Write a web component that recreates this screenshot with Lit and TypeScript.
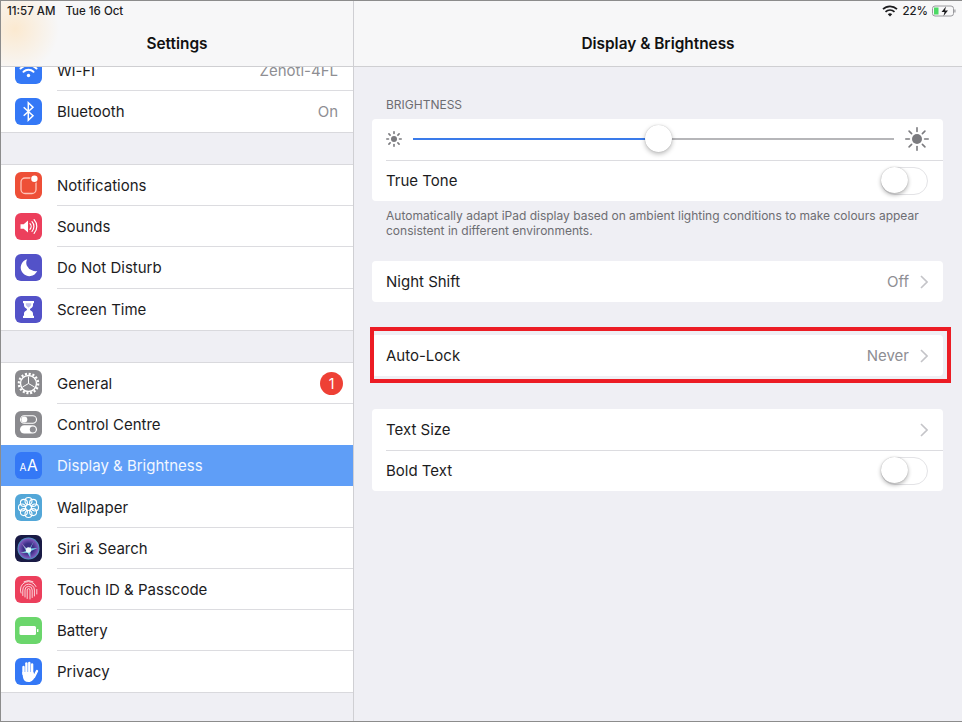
import { LitElement, html, css, svg, nothing } from "lit";
import { customElement } from "lit/decorators.js";

const polar = (r: number, deg: number) => {
  const a = (deg * Math.PI) / 180;
  return [13.5 + r * Math.cos(a), 13.5 + r * Math.sin(a)];
};

const icons: Record<string, unknown> = {
  wifi: svg`<g fill="none" stroke="#fff" stroke-width="2" stroke-linecap="round"><path d="M5.5 11.5a11.5 11.5 0 0 1 16 0"/><path d="M8.5 14.8a7.2 7.2 0 0 1 10 0"/></g><circle cx="13.5" cy="18.5" r="1.7" fill="#fff"/>`,
  bluetooth: svg`<path d="M8.7 9.2 18 17.8 13.3 22.2V4.8L18 9.2 8.7 17.8" fill="none" stroke="#fff" stroke-width="1.5"/>`,
  notifications: svg`<rect x="6" y="6" width="15" height="15.5" rx="4" fill="none" stroke="#ffc4b8" stroke-width="1.3"/><circle cx="19.4" cy="6.8" r="4.2" fill="#ee4f37"/><circle cx="19.4" cy="6.8" r="3.2" fill="#fff"/>`,
  sounds: svg`<path d="M5.5 11.2h3.2l4.3-3.7v12l-4.3-3.7H5.5z" fill="#fff"/><g fill="none" stroke="#fff" stroke-width="1.2" stroke-linecap="round"><path d="M15 10.7a4 4 0 0 1 0 5.6"/><path d="M17 8.7a7 7 0 0 1 0 9.6"/><path d="M19.1 6.7a10 10 0 0 1 0 13.6"/></g>`,
  moon: svg`<path d="M12.2 5.2a8.6 8.6 0 1 0 10 11.8 7.6 7.6 0 0 1-5.2-.8 7.6 7.6 0 0 1-4.8-11z" fill="#fff"/>`,
  hourglass: svg`<path d="M8 5h11v2.200h-1v2.100c0 2.600-3 3-3 4.200s3 1.600 3 4.200v2.100h1V22H8v-2.200h1v-2.100c0-2.600 3-3 3-4.200s-3-1.600-3-4.200V7.200H8z" fill="#fff"/><path d="M10.800 7.200h5.400v1.600c0 1.300-1.700 1.900-2.700 3-1-1.100-2.700-1.700-2.700-3z" fill="#5352c8" opacity=".35"/>`,
  gear: svg`<circle cx="13.5" cy="13.500" r="8" fill="none" stroke="#fff" stroke-width="1.400"/><circle cx="13.5" cy="13.500" r="9.700" fill="none" stroke="#fff" stroke-width="2.200" stroke-dasharray="2.100 1.700"/><g stroke="#fff" stroke-width="1"><path d="M13.5 13.500V6.500"/><path d="M13.5 13.500 19.500 17"/><path d="M13.5 13.500 7.500 17"/></g>`,
  control: svg`<rect x="5.500" y="4.800" width="16" height="7.400" rx="3.700" fill="none" stroke="#fff" stroke-width="1.100"/><circle cx="9.300" cy="8.500" r="3" fill="#fff"/><rect x="5" y="14.200" width="17" height="8.400" rx="4.200" fill="#fff"/><circle cx="17.800" cy="18.400" r="3" fill="#8e8e93"/>`,
  aa: svg`<text x="4.500" y="18.500" class="aa" font-size="10">A</text><text x="12" y="19" class="aa" font-size="15.500">A</text>`,
  flower: svg`<g fill="none" stroke="#fff" stroke-width="1.100">${[0, 45, 90, 135, 180, 225, 270, 315].map((d) => {
    const [x, y] = polar(6.5, d);
    return svg`<circle cx=${x} cy=${y} r="3.500"/>`;
  })}<circle cx="13.500" cy="13.500" r="3"/></g>`,
  siri: svg`<circle cx="13.500" cy="13.500" r="11" fill="url(#siriRing)"/><path d="M13.500 15.500 6.500 8l4.800 8-6.300 2 7.500-.2L15.500 23l-.2-6.800L22.500 13l-7 .6L19 6z" fill="url(#siriBlade)"/><circle cx="13.500" cy="15" r="2.700" fill="#eaf8fc"/>`,
  finger: svg`<g fill="none" stroke="#fff" stroke-width=".85" stroke-linecap="round" opacity=".92"><path d="M6 17a8 8 0 0 1 15-6.500"/><path d="M21.800 13.500V18"/><path d="M7.800 19.500V14a5.800 5.800 0 0 1 11.600 0v6"/><path d="M10 21v-7a3.600 3.600 0 0 1 7.200 0v7.500"/><path d="M12.200 22.500V14a1.400 1.400 0 0 1 2.800 0v9"/><path d="M9 5.700a9 9 0 0 1 9 0"/></g>`,
  battery: svg`<rect x="4.500" y="9" width="16.500" height="9" rx="1.500" fill="#fff"/><rect x="22" y="12" width="1.400" height="3" rx=".6" fill="#fff"/>`,
  hand: svg`<g stroke="#fff" stroke-width="2.400" stroke-linecap="round" fill="none"><path d="M8.500 9v7"/><path d="M11.400 5.500v9"/><path d="M14.300 5v9"/><path d="M17.100 6.500v8"/><path d="M19 19l3-6"/></g><path d="M7.300 14h11l1.700 4c-1 3.500-3.200 6-6.500 6-3.500 0-5-2-5.500-4.500z" fill="#fff"/>`,
};

type Row = { name: string; color: string; icon: string; value?: string; badge?: string; selected?: boolean };

const groups: Row[][] = [
  [
    { name: "Wi-Fi", color: "#3478f6", icon: "wifi", value: "Zenoti-4FL" },
    { name: "Bluetooth", color: "#3478f6", icon: "bluetooth", value: "On" },
  ],
  [
    { name: "Notifications", color: "#ee4f37", icon: "notifications" },
    { name: "Sounds", color: "#ec3f5c", icon: "sounds" },
    { name: "Do Not Disturb", color: "#5352c8", icon: "moon" },
    { name: "Screen Time", color: "#5352c8", icon: "hourglass" },
  ],
  [
    { name: "General", color: "#8a8a8e", icon: "gear", badge: "1" },
    { name: "Control Centre", color: "#8a8a8e", icon: "control" },
    { name: "Display & Brightness", color: "#3478f6", icon: "aa", selected: true },
    { name: "Wallpaper", color: "#53a7d8", icon: "flower" },
    { name: "Siri & Search", color: "#191a45", icon: "siri" },
    { name: "Touch ID & Passcode", color: "#ec3f5c", icon: "finger" },
    { name: "Battery", color: "#6bd66c", icon: "battery" },
    { name: "Privacy", color: "#3478f6", icon: "hand" },
  ],
];

const sun = (core: number, inner: number, outer: number, w: number) => svg`
  <circle cx="12" cy="12" r=${core} fill="#7b7b7f"/>
  <g stroke="#7b7b7f" stroke-width=${w} stroke-linecap="round">
    ${[0, 45, 90, 135, 180, 225, 270, 315].map((d) => {
      const a = (d * Math.PI) / 180;
      return svg`<line x1=${12 + inner * Math.cos(a)} y1=${12 + inner * Math.sin(a)} x2=${12 + outer * Math.cos(a)} y2=${12 + outer * Math.sin(a)}/>`;
    })}
  </g>`;

const chevron = html`<svg class="chev" width="8" height="14" viewBox="0 0 8 14"><path d="M1 1 7 7 1 13" fill="none" stroke="#c4c4c8" stroke-width="1.600"/></svg>`;
const toggle = html`<div class="toggle"><div class="knob"></div></div>`;

@customElement("app-root")
export class AppRoot extends LitElement {
  static styles = css`
    :host {
      display: block;
      position: relative;
      width: 962px;
      height: 722px;
      box-sizing: border-box;
      overflow: hidden;
      border-top: 1px solid #8c8c8c;
      border-left: 1px solid #8c8c8c;
      border-bottom: 1px solid #8c8c8c;
      background: #efeff4;
      font-family: "Inter", "Liberation Sans", sans-serif;
      font-size: 15px;
      color: #1c1c1e;
    }
    .layout { display: flex; height: 100%; }
    .side {
      width: 352px;
      flex: none;
      display: flex;
      flex-direction: column;
      border-right: 1px solid #cfcfd3;
    }
    .bar {
      height: 66px;
      flex: none;
      box-sizing: border-box;
      border-bottom: 1px solid #cfcfd2;
      background: #f7f7f8;
      display: flex;
      align-items: flex-end;
      justify-content: center;
      padding-bottom: 12px;
      font-size: 15.4px;
      font-weight: 600;
      line-height: 20px;
      color: #111;
      position: relative;
      z-index: 1;
    }
    .side .bar {
      background: radial-gradient(circle at 14px 28px, rgba(255, 222, 175, 0.55), rgba(255, 222, 175, 0) 44px), #f7f7f8;
    }
    .list { flex: 1; overflow: hidden; }
    .group { background: #fff; border-bottom: 1px solid #d9d9dd; margin-bottom: 31.2px; }
    .group.top { border-top: 1px solid #d9d9dd; }
    .group.first { margin-top: -17.4px; margin-bottom: 31px; }
    .row {
      height: 41.2px;
      display: flex;
      align-items: center;
      padding-left: 14px;
      padding-right: 15px;
      position: relative;
      box-sizing: border-box;
    }
    .row + .row::before {
      content: "";
      position: absolute;
      left: 56px;
      right: 0;
      top: -1px;
      height: 1px;
      background: #dcdce0;
    }
    .row.sel { background: #5f9ef7; color: #f2f7ff; }
    .row.sel::before, .row.sel + .row::before { display: none; }
    .ic { width: 27px; height: 27px; border-radius: 6px; flex: none; display: block; margin-right: 15px; }
    .aa { fill: #fff; font-family: "Inter", sans-serif; }
    .name { flex: 1; }
    .val { color: #8e8e93; }
    .badge {
      width: 23px;
      height: 23px;
      border-radius: 50%;
      background: #ee4035;
      color: #fff;
      font-size: 14px;
      display: flex;
      align-items: center;
      justify-content: center;
      margin-right: -5px;
    }
    .main { flex: 1; min-width: 0; display: flex; flex-direction: column; }
    .content { padding: 30px 19px 0 18px; }
    .label { height: 16px; line-height: 16px; font-size: 12px; color: #6d6d72; padding-left: 14px; margin-bottom: 6px; }
    .card { background: #fff; border-radius: 4px; }
    .item {
      height: 41px;
      display: flex;
      align-items: center;
      padding: 0 15px 0 14px;
      position: relative;
      box-sizing: border-box;
    }
    .item + .item::before {
      content: "";
      position: absolute;
      left: 14px;
      right: 0;
      top: -0.5px;
      height: 1px;
      background: #dcdce0;
    }
    .item .val { margin-right: 11px; }
    .chev { flex: none; }
    .note {
      font-size: 12px;
      line-height: 15px;
      color: #6d6d72;
      padding: 0 14px;
      margin: 7px 0 23px;
    }
    .gap { margin-bottom: 33px; position: relative; }
    .slider { padding: 0 14px 1px 10px; }
    .sun { flex: none; }
    .track { flex: 1; height: 2px; background: #b6b6b9; position: relative; margin: 0 11px 0 7px; }
    .fill { position: absolute; left: 0; top: 0; bottom: 0; background: #3a7bea; }
    .thumb {
      position: absolute;
      top: -13px;
      width: 27px;
      height: 27px;
      margin-left: -13.500px;
      border-radius: 50%;
      background: #fff;
      box-shadow: 0 2px 5px rgba(0, 0, 0, 0.28), 0 0 1px rgba(0, 0, 0, 0.25);
    }
    .toggle {
      width: 47px;
      height: 28px;
      box-sizing: border-box;
      border: 1px solid #e3e3e6;
      border-radius: 14px;
      background: #fff;
      position: relative;
    }
    .knob {
      position: absolute;
      left: -1px;
      top: -1px;
      width: 27px;
      height: 26px;
      border-radius: 50%;
      background: #fff;
      box-shadow: 0 2px 4px rgba(0, 0, 0, 0.3), 0 0 1px rgba(0, 0, 0, 0.3);
    }
    .highlight {
      position: absolute;
      left: -2px;
      right: -8px;
      top: -8px;
      bottom: -7px;
      border: 4px solid #ec1c24;
      pointer-events: none;
    }
    .status {
      position: absolute;
      left: 0;
      right: 0;
      top: 0;
      height: 20px;
      display: flex;
      align-items: center;
      padding: 0 6px;
      font-size: 11.500px;
      font-weight: 500;
      color: #1c1c1e;
      z-index: 2;
      gap: 10px;
    }
    .status .right { margin-left: auto; display: flex; align-items: center; gap: 4px; }
  `;

  private renderIcon(r: Row) {
    return html`<svg class="ic" viewBox="0 0 27 27" style="background:${r.color}">
      <defs>
        <radialGradient id="siriRing"><stop offset="0.45" stop-color="#3a2f86"/><stop offset="0.85" stop-color="#7a55b8"/><stop offset="1" stop-color="#4a9fc8"/></radialGradient>
        <linearGradient id="siriBlade" x1="0" x2="1" y1="0" y2="1"><stop offset="0" stop-color="#d24fb0"/><stop offset="0.5" stop-color="#7fe0e6"/><stop offset="1" stop-color="#5aa6ee"/></linearGradient>
      </defs>
      ${icons[r.icon]}
    </svg>`;
  }

  private renderRow(r: Row) {
    return html`<div class="row ${r.selected ? "sel" : ""}">
      ${this.renderIcon(r)}
      <span class="name">${r.name}</span>
      ${r.value ? html`<span class="val">${r.value}</span>` : nothing}
      ${r.badge ? html`<span class="badge">${r.badge}</span>` : nothing}
    </div>`;
  }

  render() {
    return html`
      <div class="status">
        <span>11:57 AM</span><span>Tue 16 Oct</span>
        <span class="right">
          <svg width="16" height="12" viewBox="0 0 16 12"><g fill="none" stroke="#1c1c1e" stroke-width="1.700"><path d="M1 4.200a10 10 0 0 1 14 0"/><path d="M3.500 6.800a6.500 6.500 0 0 1 9 0"/></g><path d="M5.800 9.200a3.200 3.200 0 0 1 4.400 0L8 11.500z" fill="#1c1c1e"/></svg>
          <span>22%</span>
          <svg width="24" height="12" viewBox="0 0 24 12"><rect x=".5" y="1" width="21" height="10" rx="2.500" fill="none" stroke="#9a9a9e"/><rect x="2" y="2.500" width="4.500" height="7" fill="#4cd964"/><path d="M14 1.500 9.500 7h3l-1 4 4.500-5.500h-3z" fill="#1c1c1e"/><rect x="22.300" y="4.500" width="1.200" height="3" fill="#9a9a9e"/></svg>
        </span>
      </div>
      <div class="layout">
        <div class="side">
          <div class="bar">Settings</div>
          <div class="list">
            ${groups.map(
              (g, i) => html`<div class="group ${i === 0 ? "first" : "top"}">${g.map((r) => this.renderRow(r))}</div>`
            )}
          </div>
        </div>
        <div class="main">
          <div class="bar">Display &amp; Brightness</div>
          <div class="content">
            <div class="label">BRIGHTNESS</div>
            <div class="card">
              <div class="item slider">
                <svg class="sun" width="24" height="24" viewBox="0 0 24 24">${sun(3, 5.5, 7.2, 1.6)}</svg>
                <div class="track">
                  <div class="fill" style="width:${(245 / 481) * 100}%"></div>
                  <div class="thumb" style="left:${(245 / 481) * 100}%"></div>
                </div>
                <svg class="sun" width="24" height="24" viewBox="0 0 24 24">${sun(5, 7.6, 11.2, 1.6)}</svg>
              </div>
              <div class="item"><span class="name">True Tone</span>${toggle}</div>
            </div>
            <div class="note">Automatically adapt iPad display based on ambient lighting conditions to make colours appear consistent in different environments.</div>
            <div class="card gap">
              <div class="item"><span class="name">Night Shift</span><span class="val">Off</span>${chevron}</div>
            </div>
            <div class="card gap">
              <div class="item"><span class="name">Auto-Lock</span><span class="val">Never</span>${chevron}</div>
              <div class="highlight"></div>
            </div>
            <div class="card">
              <div class="item"><span class="name">Text Size</span>${chevron}</div>
              <div class="item"><span class="name">Bold Text</span>${toggle}</div>
            </div>
          </div>
        </div>
      </div>
    `;
  }
}
